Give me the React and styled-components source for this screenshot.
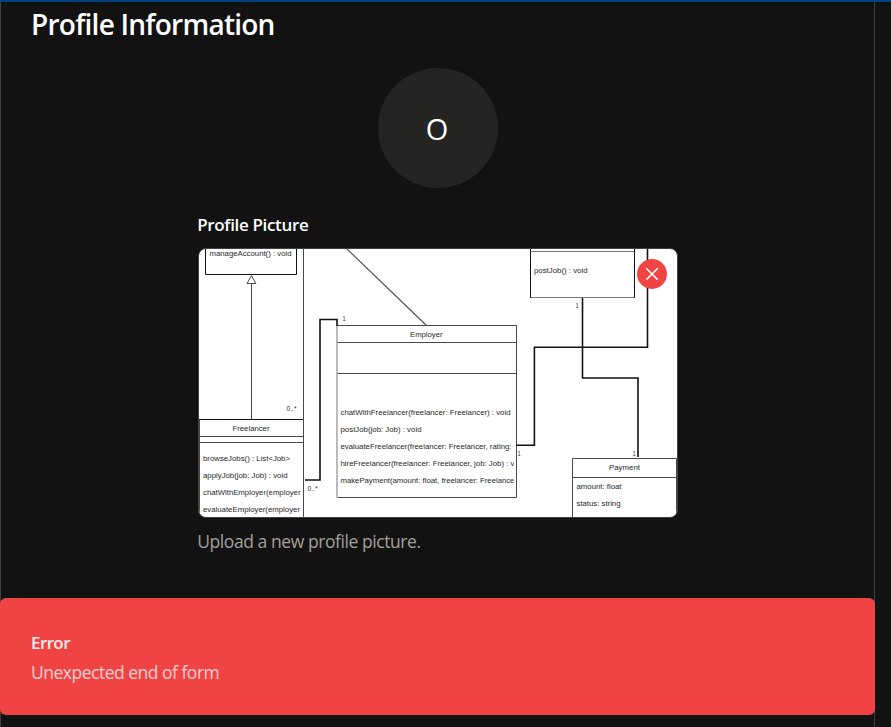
import React from "react";
import styled, { createGlobalStyle } from "styled-components";

const GlobalStyle = createGlobalStyle`
  * { box-sizing: border-box; }
  html, body { margin: 0; padding: 0; height: 100%; overflow: hidden; background: #121212; }
  body { font-family: "Segoe UI", "Open Sans", "Noto Sans", sans-serif; color: #fff; }
`;

const Page = styled.div`
  height: 727px;
  border-top: 2px solid #00427f;
  background: #121212;
`;

const Panel = styled.main`
  width: 875px;
  height: 725px;
  border: solid #404040;
  border-width: 0 1px;
  padding: 2px 30px 0 30px;
  display: flex;
  flex-direction: column;
`;

const Title = styled.h1`
  margin: 0;
  height: 40px;
  font-size: 28px;
  line-height: 40px;
  font-weight: 650;
  white-space: nowrap;
  letter-spacing: -0.75px;
`;

const Avatar = styled.div`
  width: 120px;
  height: 120px;
  margin: 24px auto 0;
  border-radius: 50%;
  background: #242422;
  display: flex;
  align-items: center;
  justify-content: center;
  font-size: 29px;
  line-height: 40px;
  padding: 1px 1px 0 0;
`;

const Field = styled.section`
  width: 480px;
  margin: 24px auto 0;
  display: flex;
  flex-direction: column;
`;

const Label = styled.div`
  height: 26px;
  line-height: 25px;
  font-size: 17px;
  font-weight: 650;
  letter-spacing: -0.34px;
  text-indent: -0.3px;
`;

const Preview = styled.div`
  position: relative;
  width: 480px;
  height: 270px;
  margin-top: 10px;
  border: 1px solid #404040;
  border-radius: 8px;
  overflow: hidden;
  background: #fff;
`;

const Diagram = styled.svg`
  display: block;
  font-family: "Liberation Sans", Arial, sans-serif;
`;

const RemoveButton = styled.button`
  position: absolute;
  top: 10px;
  right: 10px;
  width: 30px;
  height: 30px;
  padding: 0;
  border: 0;
  border-radius: 50%;
  background: #ef4444;
  display: flex;
  align-items: center;
  justify-content: center;
`;

const Hint = styled.p`
  margin: 10px 0 0;
  height: 28px;
  line-height: 27px;
  font-size: 17.5px;
  letter-spacing: -0.43px;
  text-indent: -0.3px;
  color: #a3a09b;
`;

const Toast = styled.div`
  position: fixed;
  left: 0;
  top: 598px;
  width: 875px;
  height: 117px;
  padding: 30px 31px;
  border-radius: 6px;
  background: #f04444;
`;

const ToastTitle = styled.div`
  height: 29px;
  line-height: 29px;
  font-size: 17px;
  font-weight: 650;
  letter-spacing: -0.6px;
  color: #fdecec;
`;

const ToastText = styled.div`
  height: 29px;
  line-height: 30px;
  font-size: 17.5px;
  letter-spacing: -0.5px;
  color: #fbd0d0;
`;

// Each entry: text, x, baseline, rendered width
const labels = [
  ["manageAccount() : void", 209.5, 256, 82],
  ["Employer", 410, 337, 32.5],
  ["postJob() : void", 534, 273, 53.5],
  ["Freelancer", 232.5, 431, 37],
  ["browseJobs() : List<Job>", 203, 461, 87],
  ["applyJob(job: Job) : void", 203, 478, 84.5],
  ["chatWithEmployer(employer", 203, 495, 97.5],
  ["evaluateEmployer(employer", 203, 511.5, 97],
  ["chatWithFreelancer(freelancer: Freelancer) : void", 340.5, 415, 170],
  ["postJob(job: Job) : void", 340.5, 432, 81],
  ["evaluateFreelancer(freelancer: Freelancer, rating:", 340.5, 449, 171],
  ["Payment", 609, 470, 31],
  ["amount: float", 576.5, 489, 45],
  ["status: string", 576.5, 506, 44],
];

const clippedLabels = [
  ["hireFreelancer(freelancer: Freelancer, job: Job) : v", 340.5, 466, 174],
  ["makePayment(amount: float, freelancer: Freelancer", 340.5, 483, 176.5],
];

const multiplicities = [
  ["1", 342.5, 321, 3.2],
  ["1", 575.5, 308, 3.2],
  ["1", 517.5, 456, 3.2],
  ["1", 632.5, 456, 3.2],
  ["0..*", 286.5, 411, 10],
  ["0..*", 307.5, 491, 10],
];

function Texts({ items }) {
  return items.map(([text, x, y, width]) => (
    <text key={`${x}-${y}`} x={x} y={y} textLength={width} lengthAdjust="spacingAndGlyphs">
      {text}
    </text>
  ));
}

function ClassDiagram() {
  return (
    <Diagram width="478" height="268" viewBox="199 249 478 268">
      <defs>
        <clipPath id="employer-text">
          <rect x="338" y="455" width="176" height="35" />
        </clipPath>
      </defs>
      <g fill="none" stroke="#4a4a4a" strokeWidth="1">
        <path d="M303.5 249V517M251.5 284V419" />
        <path d="M347 249L426.5 325.5" stroke="#555" strokeWidth="1.2" />
        <path d="M337 325.5H516.5V497.5H337M337 342.5H516M337 373.5H516" />
        <path d="M530 251.5H634M530 297.5H635" stroke="#777" />
        <path d="M200 436.5H303M200 442.5H303M199.5 420V517" />
        <path d="M572.5 517V458.5H676.5V517M572 477.5H677" />
        <path d="M251.5 275.5L247 283.5H255.8Z" fill="#fff" />
      </g>
      <path d="M337 326V498" stroke="#aaa" strokeWidth="1.6" />
      <g fill="none" stroke="#111">
        <path d="M205.5 249V274.5H296.5V249M199 419.5H303M530.5 249V298M634.5 249V298" />
        <path
          strokeWidth="1.6"
          d="M337 326V319.5H320V480H305M582.5 298V378H638V457M647.5 249V347.2H534.4V445.3H516"
        />
      </g>
      <g fill="#282828" fontSize="7.8">
        <Texts items={labels} />
        <g clipPath="url(#employer-text)">
          <Texts items={clippedLabels} />
        </g>
      </g>
      <g fill="#333" fontSize="6.4">
        <Texts items={multiplicities} />
      </g>
    </Diagram>
  );
}

export default function App() {
  return (
    <Page>
      <GlobalStyle />
      <Panel>
        <Title>Profile Information</Title>
        <Avatar>O</Avatar>
        <Field>
          <Label>Profile Picture</Label>
          <Preview>
            <ClassDiagram />
            <RemoveButton aria-label="Remove picture">
              <svg width="12" height="12" viewBox="0 0 12 12" fill="none" stroke="#fff" strokeWidth="1.6" strokeLinecap="round">
                <path d="M0.8 0.8L11.2 11.2M11.2 0.8L0.8 11.2" />
              </svg>
            </RemoveButton>
          </Preview>
          <Hint>Upload a new profile picture.</Hint>
        </Field>
      </Panel>
      <Toast role="alert">
        <ToastTitle>Error</ToastTitle>
        <ToastText>Unexpected end of form</ToastText>
      </Toast>
    </Page>
  );
}
